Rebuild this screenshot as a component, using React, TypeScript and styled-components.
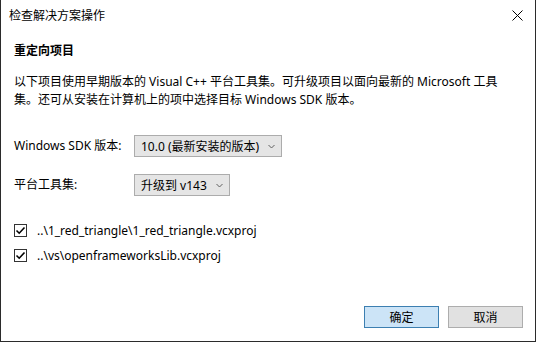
import React from 'react';
import styled, { createGlobalStyle } from 'styled-components';

const projects = [
  '..\\1_red_triangle\\1_red_triangle.vcxproj',
  '..\\vs\\openframeworksLib.vcxproj',
];

const GlobalStyle = createGlobalStyle`
  html, body {
    margin: 0;
    padding: 0;
    background: #ffffff;
  }
  body {
    font-family: "Segoe UI", "Noto Sans", "Noto Sans CJK SC", sans-serif;
    font-size: 12px;
    color: #000;
  }
`;

const CheckIcon = () => (
  <svg width="11" height="11" viewBox="0 0 11 11">
    <path d="M1.5 5.5 L4.2 8.2 L9.5 2.5" fill="none" stroke="#000" strokeWidth="1.6" />
  </svg>
);

const Chevron = () => (
  <svg width="7" height="5" viewBox="0 0 7 5">
    <path d="M0.5 1 L3.5 4 L6.5 1" fill="none" stroke="#606060" strokeWidth="1" />
  </svg>
);

const CloseIcon = () => (
  <svg width="11" height="11" viewBox="0 0 11 11">
    <path d="M0.5 0.5 L10.5 10.5 M10.5 0.5 L0.5 10.5" stroke="#000" strokeWidth="1" />
  </svg>
);

export default function App() {
  return (
    <>
      <GlobalStyle />
      <Dialog>
        <TitleBar>
          <span>检查解决方案操作</span>
          <CloseButton><CloseIcon /></CloseButton>
        </TitleBar>
        <Body>
          <Heading>重定向项目</Heading>
          <Description>
            以下项目使用早期版本的 Visual C++ 平台工具集。可升级项目以面向最新的 Microsoft 工具集。还可从安装在计算机上的项中选择目标 Windows SDK 版本。
          </Description>
          <Form>
            <Label>Windows SDK 版本:</Label>
            <Select>
              <span>10.0 (最新安装的版本)</span>
              <Chevron />
            </Select>
            <Label>平台工具集:</Label>
            <Select>
              <span>升级到 v143</span>
              <Chevron />
            </Select>
          </Form>
          <ProjectList>
            {projects.map((p) => (
              <ProjectRow key={p}>
                <CheckBox><CheckIcon /></CheckBox>
                <span>{p}</span>
              </ProjectRow>
            ))}
          </ProjectList>
        </Body>
        <Footer>
          <Button primary>确定</Button>
          <Button>取消</Button>
        </Footer>
      </Dialog>
    </>
  );
}

const Dialog = styled.div`
  width: 536px;
  height: 342px;
  box-sizing: border-box;
  display: flex;
  flex-direction: column;
  border-left: 1px solid #2b2b2b;
  border-right: 1px solid #2b2b2b;
  border-bottom: 1px solid #2b2b2b;
  background: #fff;
`;

const TitleBar = styled.div`
  height: 31px;
  display: flex;
  align-items: center;
  justify-content: space-between;
  padding-left: 8px;
  line-height: 16px;
`;

const CloseButton = styled.div`
  width: 46px;
  height: 31px;
  display: flex;
  align-items: center;
  justify-content: center;
  margin-right: -5px;
`;

const Body = styled.div`
  padding: 0 13px;
`;

const Heading = styled.div`
  margin-top: 12px;
  font-weight: bold;
  line-height: 16px;
`;

const Description = styled.p`
  margin: 14px 0 0;
  line-height: 18px;
  width: 495px;
`;

const Form = styled.div`
  margin-top: 26px;
  display: grid;
  grid-template-columns: 120px auto;
  row-gap: 17px;
  align-items: center;
  justify-items: start;
`;

const Label = styled.span`
  line-height: 16px;
`;

const Select = styled.div`
  height: 22px;
  box-sizing: border-box;
  display: flex;
  align-items: center;
  gap: 9px;
  padding: 0 6px 0 6px;
  background: #e5e5e5;
  border: 1px solid #acacac;
`;

const ProjectList = styled.div`
  margin-top: 24px;
  display: flex;
  flex-direction: column;
  gap: 5px;
`;

const ProjectRow = styled.div`
  height: 20px;
  display: flex;
  align-items: center;
  gap: 10px;
`;

const CheckBox = styled.div`
  width: 13px;
  height: 13px;
  box-sizing: border-box;
  border: 1px solid #333;
  background: #fff;
  display: flex;
  align-items: center;
  justify-content: center;
`;

const Footer = styled.div`
  margin-top: auto;
  display: flex;
  justify-content: flex-end;
  gap: 9px;
  padding: 0 12px 13px 0;
`;

const Button = styled.div<{ primary?: boolean }>`
  width: 75px;
  height: 22px;
  box-sizing: border-box;
  display: flex;
  align-items: center;
  justify-content: center;
  background: ${(p) => (p.primary ? '#cce4f7' : '#e1e1e1')};
  border: 1px solid ${(p) => (p.primary ? '#3c7fb1' : '#adadad')};
`;
